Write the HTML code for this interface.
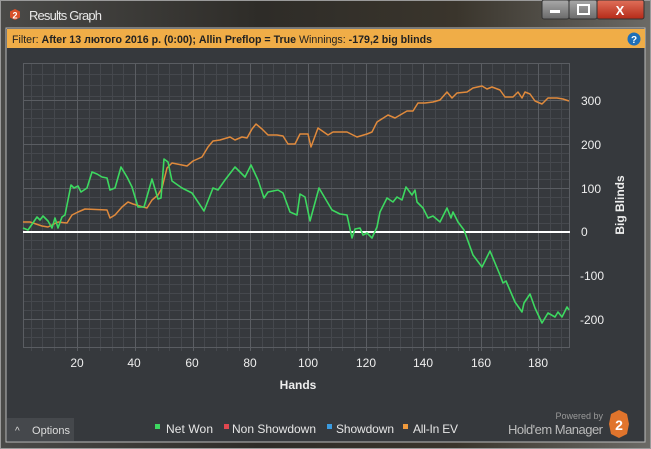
<!DOCTYPE html>
<html><head><style>
html,body{margin:0;padding:0;width:651px;height:449px;overflow:hidden;background:#5a5a5a;font-family:"Liberation Sans",sans-serif}
</style></head><body>
<svg width="651" height="449" xmlns="http://www.w3.org/2000/svg" style="position:absolute;left:0;top:0">
<defs>
<linearGradient id="tb" x1="0" y1="0" x2="1" y2="0">
<stop offset="0" stop-color="#4a4a48"/><stop offset="0.4" stop-color="#2e2c28"/><stop offset="0.7" stop-color="#3a352c"/><stop offset="1" stop-color="#6b6a66"/></linearGradient>
<linearGradient id="cl" x1="0" y1="0" x2="0" y2="1"><stop offset="0" stop-color="#e0705a"/><stop offset="1" stop-color="#b52a18"/></linearGradient>
<linearGradient id="gb" x1="0" y1="0" x2="0" y2="1"><stop offset="0" stop-color="#a9a9a9"/><stop offset="1" stop-color="#6a6a6a"/></linearGradient>
</defs>
<rect width="651" height="449" fill="url(#tb)"/>
<rect x="0" y="0" width="651" height="449" fill="none" stroke="#9a9a9a" stroke-width="2"/>
<polygon points="15,9 20,11.5 20,17.5 15,20 10,17.5 10,11.5" fill="#d8502a"/>
<text x="15" y="18.5" font-size="9" fill="#fff" font-weight="bold" text-anchor="middle">2</text>
<text x="29" y="20" font-size="13" fill="#e8e8e8" textLength="73">Results Graph</text>
<rect x="542" y="0" width="27" height="19" rx="2" fill="url(#gb)" stroke="#333"/>
<rect x="569" y="0" width="28" height="19" rx="2" fill="url(#gb)" stroke="#333"/>
<rect x="597" y="0" width="47" height="19" rx="2" fill="url(#cl)" stroke="#333"/>
<rect x="550" y="10" width="10" height="3" fill="#fff"/>
<rect x="578" y="5" width="11" height="9" fill="none" stroke="#fff" stroke-width="2"/>
<text x="620" y="15" font-size="13" font-weight="bold" fill="#fff" text-anchor="middle">X</text>
<rect x="6" y="28" width="639" height="414" fill="#36393d" stroke="#bbb" stroke-width="1"/>
<rect x="7" y="29" width="638" height="19" fill="#f0ad47"/>
<text x="12" y="43" font-size="11" fill="#222" textLength="420" lengthAdjust="spacingAndGlyphs">Filter: <tspan font-weight="bold">After 13 лютого 2016 р. (0:00); Allin Preflop = True</tspan> Winnings: <tspan font-weight="bold">-179,2 big blinds</tspan></text>
<circle cx="634" cy="39" r="6.5" fill="#1e6fb8"/><text x="634" y="43" font-size="10" font-weight="bold" fill="#fff" text-anchor="middle">?</text>
<g stroke="#45484d" stroke-width="1">
<path d="M23,74.5H570M23,85.5H570M23,96.5H570M23,109.5H570M23,118.5H570M23,127.5H570M23,136.5H570M23,153.5H570M23,162.5H570M23,171.5H570M23,179.5H570M23,197.5H570M23,206.5H570M23,214.5H570M23,223.5H570M23,240.5H570M23,249.5H570M23,258.5H570M23,266.5H570M23,284.5H570M23,293.5H570M23,301.5H570M23,310.5H570M23,328.5H570M23,337.5H570"/>
<path d="M31.5,63V351M42.5,63V351M54.5,63V351M65.5,63V351M89.5,63V351M100.5,63V351M112.5,63V351M123.5,63V351M146.5,63V351M158.5,63V351M169.5,63V351M181.5,63V351M204.5,63V351M216.5,63V351M227.5,63V351M239.5,63V351M262.5,63V351M273.5,63V351M285.5,63V351M296.5,63V351M319.5,63V351M331.5,63V351M342.5,63V351M354.5,63V351M377.5,63V351M389.5,63V351M400.5,63V351M412.5,63V351M435.5,63V351M446.5,63V351M458.5,63V351M469.5,63V351M492.5,63V351M504.5,63V351M515.5,63V351M527.5,63V351M550.5,63V351M561.5,63V351"/>
</g>
<g stroke="#5a5d62" stroke-width="1">
<path d="M23,100.5H570M23,144.5H570M23,188.5H570M23,275.5H570M23,319.5H570M23,63.5H570M23,347.5H570"/>
<path d="M23.5,63V347M77.5,63V351M135.5,63V351M193.5,63V351M250.5,63V351M308.5,63V351M366.5,63V351M423.5,63V351M481.5,63V351M538.5,63V351M569.5,63V347"/>
</g>
<line x1="23" y1="232" x2="570" y2="232" stroke="#fff" stroke-width="2"/>
<polyline fill="none" stroke="#e08a3c" stroke-width="1.5" stroke-linejoin="round" points="23,222 30,222 42,226 48,227 58,222 67,223 72,215 78,212 85,209 107,210 110,218 115,215 122,207 128,202 133,204 143,207 147,208 152,200 158,195 162,188 167,168 172,163 182,165 187,166 193,161 202,157 208,147 213,141 220,140 230,137 235,140 242,137 247,138 252,129 256,124 262,129 268,135 277,135 283,136 288,144 295,144 300,134 308,134 311,147 318,128 328,135 333,132 347,132 357,137 367,134 372,132 377,122 388,115 395,118 407,111 413,111 418,103 425,103 433,102 440,100 447,92 452,98 457,93 467,92 473,88 482,86 487,89 492,87 500,90 505,97 513,97 518,92 522,98 525,92 530,94 535,101 542,104 548,98 557,98 563,99 569,101"/>
<polyline fill="none" stroke="#3dd860" stroke-width="1.6" stroke-linejoin="round" points="23,228 28,230 37,217 40,220 43,216 48,221 52,228 55,218 58,228 62,217 65,215 71,185 74,188 78,186 81,192 87,188 92,172 97,174 102,177 107,178 110,190 115,188 121,167 127,177 132,187 138,207 144,207 152,179 158,199 161,198 164,159 168,162 172,181 182,188 192,193 204,211 213,188 218,190 225,180 235,167 245,177 251,165 258,180 264,198 268,192 273,191 278,190 283,193 290,212 297,215 300,194 305,197 310,221 319,188 332,210 340,214 347,215 352,238 355,229 360,228 363,235 367,233 372,238 377,227 380,212 387,198 393,202 397,197 402,200 406,187 412,195 415,190 417,202 423,208 428,218 433,216 440,222 447,208 451,218 453,212 458,222 464,230 473,255 482,267 490,251 500,275 503,283 506,281 515,302 522,312 524,303 530,294 535,308 542,323 548,313 555,317 558,312 562,317 567,307 569,310"/>
<g font-size="12" fill="#eee" text-anchor="middle">
<text x="77" y="367">20</text><text x="134" y="367">40</text><text x="192" y="367">60</text><text x="250" y="367">80</text><text x="308" y="367">100</text><text x="366" y="367">120</text><text x="423" y="367">140</text><text x="481" y="367">160</text><text x="538" y="367">180</text>
</g>
<g font-size="12" fill="#eee">
<text x="581" y="105">300</text><text x="581" y="149">200</text><text x="581" y="193">100</text><text x="581" y="236">0</text><text x="580" y="280">-100</text><text x="580" y="324">-200</text>
</g>
<text x="0" y="0" font-size="12" font-weight="bold" fill="#eee" text-anchor="middle" transform="translate(624,205) rotate(-90)">Big Blinds</text>
<text x="298" y="389" font-size="12" font-weight="bold" fill="#eee" text-anchor="middle">Hands</text>
<rect x="7" y="418" width="67" height="23" fill="#45484c"/>
<text x="15" y="434" font-size="10" fill="#ddd">^</text>
<text x="32" y="434" font-size="11" fill="#ddd" textLength="38">Options</text>
<g font-size="12" fill="#e6e6e6">
<rect x="155" y="424" width="5" height="5" fill="#3dd860"/><text x="166" y="433" textLength="47">Net Won</text>
<rect x="224" y="424" width="5" height="5" fill="#e0474f"/><text x="232" y="433" textLength="84">Non Showdown</text>
<rect x="327" y="424" width="5" height="5" fill="#3a9be0"/><text x="336" y="433" textLength="58">Showdown</text>
<rect x="403" y="424" width="5" height="5" fill="#f09a3c"/><text x="413" y="433" textLength="45">All-In EV</text>
</g>
<text x="603" y="419" font-size="9" fill="#999" text-anchor="end">Powered by</text>
<text x="508" y="434" font-size="13" fill="#bbb" textLength="95">Hold'em Manager</text>
<polygon points="619,410 627,414 629,424 627,434 619,438 611,434 609,424 611,414" fill="#e0742c"/>
<text x="619" y="430" font-size="14" font-weight="bold" fill="#fff" text-anchor="middle">2</text>
</svg>
</body></html>
